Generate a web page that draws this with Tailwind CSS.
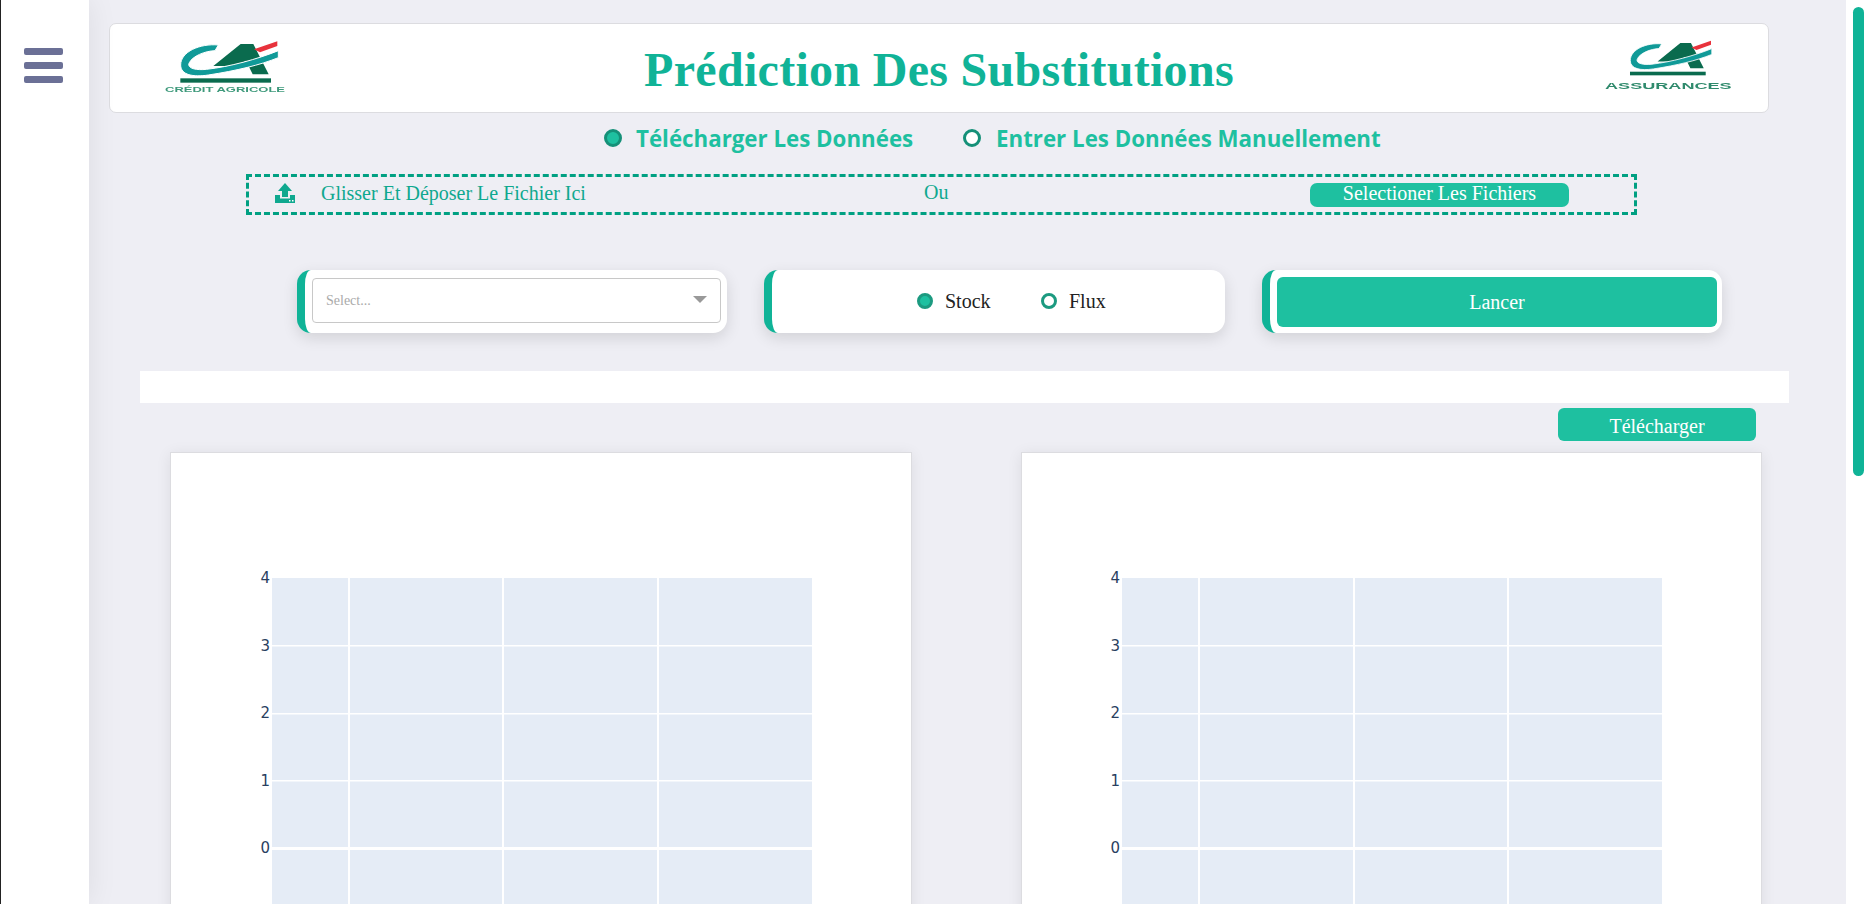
<!DOCTYPE html>
<html lang="fr">
<head>
  <meta charset="UTF-8" />
  <title>Prédiction Des Substitutions</title>
  <script src="https://cdn.jsdelivr.net/npm/@tailwindcss/browser@4"></script>
</head>
<body class="h-screen overflow-hidden bg-white font-['Liberation_Serif',serif]">
  <div class="flex h-screen overflow-hidden">

    <!-- sidebar -->
    <aside class="relative z-10 w-[89px] shrink-0 border-l border-[#222] bg-white pt-[48px] pl-[23px] shadow-[0_0_30px_rgba(0,0,0,0.08)]">
      <div class="flex w-[39px] flex-col gap-[7px]">
        <div class="h-[7px] rounded-[2px] bg-[#6b7096]"></div>
        <div class="h-[7px] rounded-[2px] bg-[#6b7096]"></div>
        <div class="h-[7px] rounded-[2px] bg-[#6b7096]"></div>
      </div>
    </aside>

    <main class="w-[1757px] shrink-0 overflow-hidden bg-[#eeeef4] pt-[23px]">

      <!-- header -->
      <header class="ml-[20px] grid h-[90px] w-[1660px] grid-cols-[1fr_auto_1fr] items-start rounded-[7px] border border-[#dcdce0] bg-white">
        <svg class="-mt-[4px] ml-[40px] h-[80px] w-[150px] justify-self-start blur-[0.5px]" viewBox="0 0 450 240">
          <path fill="#0a6b4e" d="M190 138 L272 72 L310 72 L356 163 L308 163 L288 122 L262 138 Z" />
          <path fill="#109a98" stroke="#ffffff" stroke-width="3" d="M205 75 C150 70 92 95 92 135 C92 165 130 172 175 165 C260 152 330 135 385 113 L385 92 C320 118 240 140 170 148 C130 152 110 142 118 128 C128 108 165 93 195 92 Z" />
          <path fill="#e8323c" d="M312 88 L382 64 L382 78 L330 97 Z" />
          <rect x="91" y="175" width="272" height="13" fill="#0a6b4e" />
          <text x="45" y="217" textLength="360" lengthAdjust="spacingAndGlyphs" font-family="Liberation Sans" font-weight="700" font-size="22" fill="#3f9a7c">CRÉDIT AGRICOLE</text>
        </svg>
        <h1 class="mt-[22px] text-[48px] leading-none font-bold tracking-[0.3px] text-[#10b397]">Prédiction Des Substitutions</h1>
        <svg class="mt-[6px] mr-[28px] h-[70px] w-[150px] justify-self-end blur-[0.5px]" viewBox="0 0 450 210">
          <g transform="translate(44 -21) scale(0.835)">
            <path fill="#0a6b4e" d="M190 138 L272 72 L310 72 L356 163 L308 163 L288 122 L262 138 Z" />
            <path fill="#109a98" stroke="#ffffff" stroke-width="3" d="M205 75 C150 70 92 95 92 135 C92 165 130 172 175 165 C260 152 330 135 385 113 L385 92 C320 118 240 140 170 148 C130 152 110 142 118 128 C128 108 165 93 195 92 Z" />
            <path fill="#e8323c" d="M312 88 L382 64 L382 78 L330 97 Z" />
            <rect x="91" y="175" width="272" height="13" fill="#0a6b4e" />
          </g>
          <text x="45" y="178" textLength="380" lengthAdjust="spacingAndGlyphs" font-family="Liberation Sans" font-weight="700" font-size="28" fill="#2f8a6c">ASSURANCES</text>
        </svg>
      </header>

      <!-- source radios -->
      <div class="mt-[11px] ml-[515px] flex h-[28px] items-center text-[22.3px] font-bold text-[#1ec0a0] font-['Open_Sans',sans-serif]">
        <span class="h-[18px] w-[18px] rounded-full border-[3px] border-[#159078] bg-[#1ec0a0]"></span>
        <span class="mt-[2px] ml-[14px] w-[277px] whitespace-nowrap">Télécharger Les Données</span>
        <span class="ml-[50px] h-[18px] w-[18px] rounded-full border-[3px] border-[#159078] bg-white"></span>
        <span class="mt-[2px] ml-[15px] whitespace-nowrap">Entrer Les Données Manuellement</span>
      </div>

      <!-- upload -->
      <div class="mt-[22px] ml-[157px] flex h-[41px] w-[1391px] items-center border-[3px] border-dashed border-[#00a082] text-[20px] text-[#0fa88f]">
        <svg class="-mt-[3px] ml-[26px] h-[20px] w-[20px] shrink-0" viewBox="0 0 20 20">
          <path fill="#0fa88f" d="M10 0 L17 8 L13 8 L13 14 L7 14 L7 8 L3 8 Z" />
          <path fill="#0fa88f" d="M0 12 L5 12 L5 15.5 L15 15.5 L15 12 L20 12 L20 20 L0 20 Z" />
          <rect x="14" y="17" width="1.5" height="1.5" fill="#fff" />
          <rect x="17" y="17" width="1.5" height="1.5" fill="#fff" />
        </svg>
        <span class="-mt-[3px] ml-[26px] w-[603px] shrink-0 whitespace-nowrap">Glisser Et Déposer Le Fichier Ici</span>
        <span class="-mt-[5px] w-[386px] shrink-0">Ou</span>
        <button class="h-[24px] w-[259px] shrink-0 rounded-[7px] bg-[#1ec0a0] pb-[4px] text-center text-[20px] leading-[20px] text-white">Selectioner Les Fichiers</button>
      </div>

      <!-- controls -->
      <div class="mt-[55px] ml-[208px] flex h-[63px] gap-[37px]">
        <div class="flex w-[430px] items-center rounded-[14px] border-l-[8px] border-[#10b397] bg-white pl-[7px] shadow-[0_5px_15px_rgba(0,0,0,0.12)]">
          <div class="-mt-[2px] flex h-[45px] w-[409px] items-center justify-between rounded-[4px] border border-[#c8c8c8] pr-[13px] pl-[13px] text-[14px] text-[#aaaaaa]">
            <span>Select...</span>
            <span class="-mt-[3px] h-0 w-0 border-x-[7px] border-t-[7px] border-x-transparent border-t-[#999999]"></span>
          </div>
        </div>
        <div class="flex w-[461px] items-center rounded-[14px] border-l-[8px] border-[#10b397] bg-white pl-[145px] text-[20px] text-[#222222] shadow-[0_5px_15px_rgba(0,0,0,0.12)]">
          <span class="-mt-[2px] h-[16px] w-[16px] rounded-full border-[3px] border-[#1c9a80] bg-[#1ec0a0]"></span>
          <span class="-mt-[2px] ml-[12px] w-[46px]">Stock</span>
          <span class="-mt-[2px] ml-[50px] h-[16px] w-[16px] rounded-full border-[3px] border-[#1c9a80] bg-white"></span>
          <span class="-mt-[2px] ml-[12px]">Flux</span>
        </div>
        <div class="flex w-[460px] items-center rounded-[14px] border-l-[8px] border-[#10b397] bg-white pr-[5px] pl-[7px] shadow-[0_5px_15px_rgba(0,0,0,0.12)]">
          <button class="h-[50px] w-full rounded-[6px] bg-[#1ec0a0] text-[20px] text-white">Lancer</button>
        </div>
      </div>

      <div class="mt-[38px] ml-[51px] h-[32px] w-[1649px] bg-white"></div>

      <button class="mt-[5px] ml-[1469px] block h-[33px] w-[198px] rounded-[6px] bg-[#1ec0a0] pt-[2px] text-[20px] text-white">Télécharger</button>

      <!-- charts -->
      <div class="mt-[11px] ml-[81px] flex gap-[109px]">
        <div class="h-[520px] w-[742px] shrink-0 border border-[#dcdce0] bg-white shadow-[0_2px_14px_rgba(0,0,0,0.08)]">
          <svg class="ml-[1px]" width="739" height="518" font-family="DejaVu Sans" font-size="15" fill="#2a3f5f" text-anchor="end">
            <rect x="100" y="125" width="540" height="400" fill="#e5ecf6" />
            <g fill="#ffffff">
              <rect x="176" y="125" width="2" height="400" />
              <rect x="330" y="125" width="2" height="400" />
              <rect x="485" y="125" width="2" height="400" />
              <rect x="100" y="192" width="540" height="1.5" />
              <rect x="100" y="260" width="540" height="1.5" />
              <rect x="100" y="327" width="540" height="1.5" />
              <rect x="100" y="394" width="540" height="3" />
            </g>
            <text x="98" y="130">4</text>
            <text x="98" y="198">3</text>
            <text x="98" y="265">2</text>
            <text x="98" y="333">1</text>
            <text x="98" y="400">0</text>
          </svg>
        </div>
        <div class="h-[520px] w-[741px] shrink-0 border border-[#dcdce0] bg-white shadow-[0_2px_14px_rgba(0,0,0,0.08)]">
          <svg width="739" height="518" font-family="DejaVu Sans" font-size="15" fill="#2a3f5f" text-anchor="end">
            <rect x="100" y="125" width="540" height="400" fill="#e5ecf6" />
            <g fill="#ffffff">
              <rect x="176" y="125" width="2" height="400" />
              <rect x="331" y="125" width="2" height="400" />
              <rect x="485" y="125" width="2" height="400" />
              <rect x="100" y="192" width="540" height="1.5" />
              <rect x="100" y="260" width="540" height="1.5" />
              <rect x="100" y="327" width="540" height="1.5" />
              <rect x="100" y="394" width="540" height="3" />
            </g>
            <text x="98" y="130">4</text>
            <text x="98" y="198">3</text>
            <text x="98" y="265">2</text>
            <text x="98" y="333">1</text>
            <text x="98" y="400">0</text>
          </svg>
        </div>
      </div>
    </main>

    <!-- scrollbar -->
    <div class="flex-1 bg-white pt-[7px] pl-[7px]">
      <div class="h-[469px] w-[11px] rounded-[6px] bg-[#10b397]"></div>
    </div>
  </div>
</body>
</html>
